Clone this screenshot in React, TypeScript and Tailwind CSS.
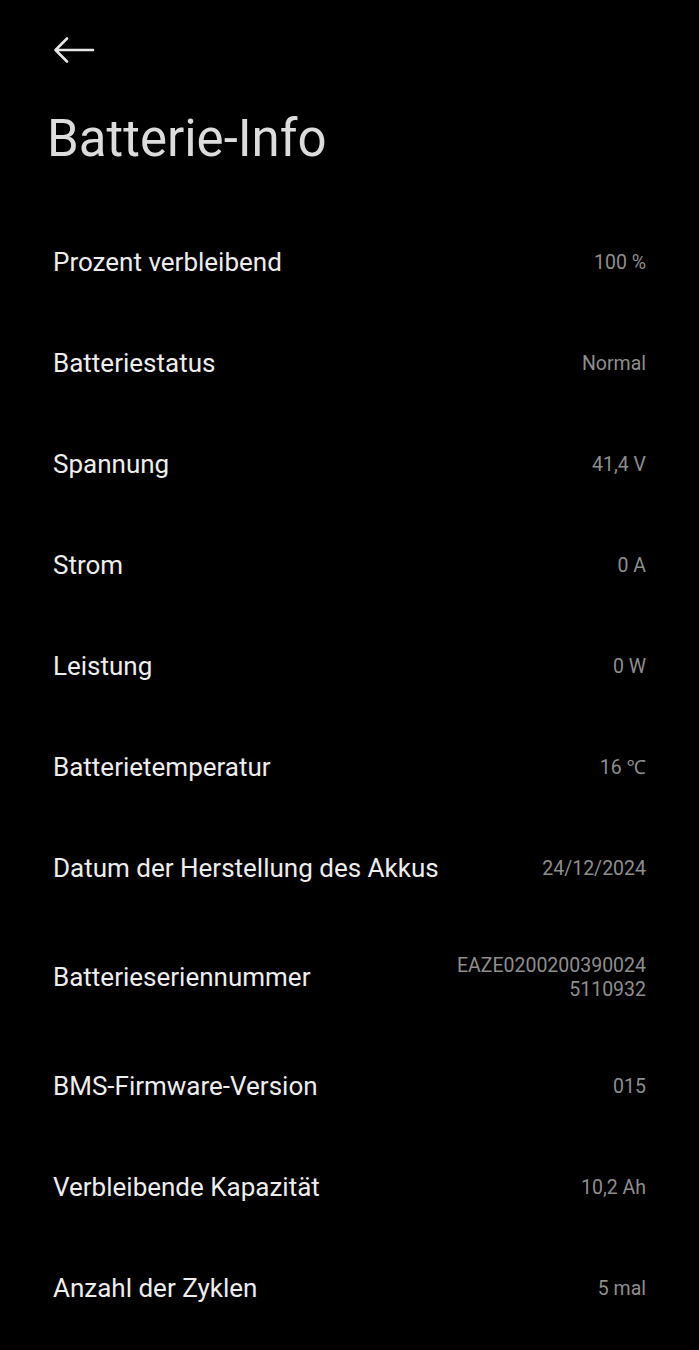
import React from 'react';

type Row = { label: string; value: string[] };

const ROWS: Row[] = [
  { label: 'Prozent verbleibend', value: ['100 %'] },
  { label: 'Batteriestatus', value: ['Normal'] },
  { label: 'Spannung', value: ['41,4 V'] },
  { label: 'Strom', value: ['0 A'] },
  { label: 'Leistung', value: ['0 W'] },
  { label: 'Batterietemperatur', value: ['16 ℃'] },
  { label: 'Datum der Herstellung des Akkus', value: ['24/12/2024'] },
  { label: 'Batterieseriennummer', value: ['EAZE0200200390024', '5110932'] },
  { label: 'BMS-Firmware-Version', value: ['015'] },
  { label: 'Verbleibende Kapazität', value: ['10,2 Ah'] },
  { label: 'Anzahl der Zyklen', value: ['5 mal'] },
];

export default function App() {
  return (
    <div
      className="min-h-[1350px] w-full bg-black"
      style={{ fontFamily: 'Roboto, "Noto Sans", sans-serif' }}
    >
      {/* Header */}
      <div className="px-[53px] pt-[36px]">
        <button className="block h-[28px] w-[42px]" aria-label="Zurück">
          <svg viewBox="0 0 42 28" className="h-[28px] w-[42px]" fill="none">
            <path
              d="M40 14H3M14 2.5L2.5 14L14 25.5"
              stroke="#e6e6e6"
              strokeWidth="2.6"
              strokeLinecap="round"
              strokeLinejoin="round"
            />
          </svg>
        </button>
      </div>
      <h1 className="mt-[47px] pl-[47px] text-[51px] leading-[56px] text-[#dcdcdc]">
        Batterie-Info
      </h1>

      {/* Info rows */}
      <div className="mt-[44px] px-[53px]">
        {ROWS.map((row) => (
          <div key={row.label} className="flex items-center justify-between py-[34.5px]">
            <span className="text-[26px] leading-[32px] text-[#ededed]">{row.label}</span>
            <div className="translate-y-[1px] text-right text-[19.5px] leading-[24px] text-[#8e8e8e]">
              {row.value.map((v) => (
                <div key={v}>{v}</div>
              ))}
            </div>
          </div>
        ))}
      </div>
    </div>
  );
}
